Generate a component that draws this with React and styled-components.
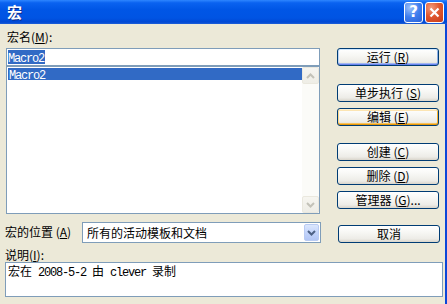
import React from "react";
import styled, { createGlobalStyle, css } from "styled-components";

const GlobalStyle = createGlobalStyle`
  html, body { margin: 0; padding: 0; background: #ECE9D8; }
  body { font-family: "Noto Sans CJK SC", "Noto Sans", sans-serif; font-size: 12px; color: #000; }
  * { box-sizing: border-box; }
`;

const Window = styled.div`
  width: 447px;
  height: 304px;
  display: flex;
  flex-direction: column;
  overflow: hidden;
  background: #ECE9D8;
`;

const TitleBar = styled.div`
  height: 24px;
  flex: none;
  display: flex;
  align-items: center;
  padding: 0 3px 0 7px;
  background: linear-gradient(
    to bottom,
    #2E86FF 0%,
    #0A62F0 12%,
    #0056E6 40%,
    #0054E3 75%,
    #0048D4 92%,
    #1D5FD8 100%
  );
`;

const TitleText = styled.div`
  flex: 1;
  color: #fff;
  font-weight: bold;
  font-size: 15px;
  line-height: 18px;
  text-shadow: 1px 1px 0 #0A2A8A;
`;

const TitleButtons = styled.div`
  display: flex;
  gap: 2px;
`;

const CaptionButton = styled.div`
  width: 19px;
  height: 21px;
  border: 1px solid #fff;
  border-radius: 3px;
  display: flex;
  align-items: center;
  justify-content: center;
  color: #fff;
  font-family: "DejaVu Sans", sans-serif;
  font-weight: bold;
  font-size: 15px;
  ${(p) =>
    p.$kind === "close"
      ? css`
          background: radial-gradient(circle at 30% 25%, #F29A7C 0%, #E0582F 45%, #C83B1A 100%);
        `
      : css`
          background: radial-gradient(circle at 30% 25%, #9CC1FA 0%, #3F7EEE 50%, #2A62D8 100%);
        `}
`;

const Body = styled.div`
  flex: 1;
  display: flex;
  flex-direction: column;
  padding: 5px 0 0 6px;
  border-right: 2px solid #0B46D8;
`;

const TopSection = styled.div`
  display: flex;
  gap: 17px;
`;

const LeftCol = styled.div`
  width: 314px;
  display: flex;
  flex-direction: column;
`;

const RightCol = styled.div`
  width: 102px;
  display: flex;
  flex-direction: column;
  padding-top: 19px;
`;

const Label = styled.div`
  height: 16px;
  line-height: 16px;
  margin-left: ${(p) => p.$ml || 0}px;
  white-space: nowrap;
`;

const Mono = styled.span`
  font-family: "Liberation Mono", "DejaVu Sans Mono", monospace;
  font-size: 12px;
  letter-spacing: -1.2px;
  white-space: pre;
`;

const TextInput = styled.div`
  margin-top: 3px;
  height: 18px;
  border: 1px solid #7F9DB9;
  background: #fff;
  padding: 0 1px;
  display: flex;
  align-items: center;
`;

const Selected = styled.span`
  background: #316AC5;
  color: #fff;
  height: 14px;
  line-height: 14px;
  display: inline-block;
  padding-right: 1px;
`;

const ListBox = styled.div`
  height: 148px;
  border: 1px solid #7F9DB9;
  background: #fff;
  display: flex;
`;

const Items = styled.div`
  flex: 1;
  padding: 1px 0 0 1px;
`;

const Item = styled.div`
  height: 12px;
  line-height: 12px;
  padding-left: 1px;
  ${(p) =>
    p.$selected &&
    css`
      background: #316AC5;
      color: #fff;
    `}
`;

const ScrollBar = styled.div`
  width: 17px;
  display: flex;
  flex-direction: column;
  background: #FBFBF8;
`;

const ScrollArrow = styled.div`
  height: 17px;
  border: 1px solid #EAE8DE;
  border-radius: 2px;
  background: linear-gradient(to bottom, #F6F5F0, #EEEDE6);
  display: flex;
  align-items: center;
  justify-content: center;
`;

const ScrollTrack = styled.div`
  flex: 1;
`;

const ButtonBase = styled.div`
  width: 102px;
  height: 18px;
  border: 1px solid #003C74;
  border-radius: 3px;
  display: flex;
  align-items: center;
  justify-content: center;
  white-space: nowrap;
  line-height: 16px;
  margin-top: ${(p) => p.$mt || 0}px;
  background: linear-gradient(to bottom, #FFFFFF 0%, #F7F7F4 40%, #EDECE7 80%, #D9D5CB 100%);
  ${(p) =>
    p.$state === "default" &&
    css`
      box-shadow: inset 0 1px 0 #CEE7FF, inset 0 -1px 0 #6982EE, inset 1px 0 0 #BCD4F6,
        inset -1px 0 0 #89ADE4, inset 0 -2px 0 #A0B6F0;
    `}
  ${(p) =>
    p.$state === "hot" &&
    css`
      box-shadow: inset 0 1px 0 #FFF0CF, inset 0 -1px 0 #E5970A, inset 1px 0 0 #FBD88C,
        inset -1px 0 0 #F8B330, inset 0 -2px 0 #F9C25A, inset 0 2px 0 #FCE5B3;
    `}
`;

const LocationRow = styled.div`
  margin-top: 8px;
  display: flex;
  align-items: flex-start;
`;

const LocationLabel = styled(Label)`
  width: 77px;
  margin-left: -1px;
  margin-top: 2px;
`;

const Combo = styled.div`
  width: 239px;
  height: 21px;
  border: 1px solid #7F9DB9;
  background: #fff;
  display: flex;
  align-items: center;
  padding-left: 4px;
`;

const ComboText = styled.div`
  flex: 1;
`;

const ComboArrow = styled.div`
  width: 15px;
  height: 17px;
  margin-right: 1px;
  border: 1px solid #B9CBF3;
  border-radius: 2px;
  background: linear-gradient(to bottom, #DCE7FD 0%, #C3D4FB 50%, #B2C6F5 100%);
  display: flex;
  align-items: center;
  justify-content: center;
`;

const CancelWrap = styled.div`
  margin-left: 17px;
  margin-top: 3px;
`;

const DescLabel = styled(Label)`
  margin-top: 4px;
  margin-left: -1px;
  height: 15px;
  line-height: 15px;
`;

const TextArea = styled.div`
  margin-left: -1px;
  width: 438px;
  height: 35px;
  border: 1px solid #7F9DB9;
  background: #fff;
  padding: 1px 2px;
  line-height: 14px;
`;

const Chevron = ({ dir = "down", color = "#C3C2B8", w = 7 }) => (
  <svg width={w + 2} height="6" viewBox="0 0 9 6">
    <path
      d={dir === "down" ? "M1 1 L4.5 4.5 L8 1" : "M1 5 L4.5 1.5 L8 5"}
      fill="none"
      stroke={color}
      strokeWidth="2"
    />
  </svg>
);

const Acc = ({ children }) => (
  <>
    (<u>{children}</u>)
  </>
);

export default function App() {
  return (
    <>
      <GlobalStyle />
      <Window>
        <TitleBar>
          <TitleText>宏</TitleText>
          <TitleButtons>
            <CaptionButton $kind="help">?</CaptionButton>
            <CaptionButton $kind="close">
              <svg width="11" height="11" viewBox="0 0 11 11">
                <path d="M1.5 1.5 L9.5 9.5 M9.5 1.5 L1.5 9.5" stroke="#fff" strokeWidth="2.2" />
              </svg>
            </CaptionButton>
          </TitleButtons>
        </TitleBar>
        <Body>
          <TopSection>
            <LeftCol>
              <Label $ml={1}>
                宏名<Acc>M</Acc>:
              </Label>
              <TextInput>
                <Selected>
                  <Mono>Macro2</Mono>
                </Selected>
              </TextInput>
              <ListBox>
                <Items>
                  <Item $selected>
                    <Mono>Macro2</Mono>
                  </Item>
                </Items>
                <ScrollBar>
                  <ScrollArrow>
                    <Chevron dir="up" />
                  </ScrollArrow>
                  <ScrollTrack />
                  <ScrollArrow>
                    <Chevron dir="down" />
                  </ScrollArrow>
                </ScrollBar>
              </ListBox>
            </LeftCol>
            <RightCol>
              <ButtonBase $state="default">
                运行 <Acc>R</Acc>
              </ButtonBase>
              <ButtonBase $mt={18}>
                单步执行 <Acc>S</Acc>
              </ButtonBase>
              <ButtonBase $mt={6} $state="hot">
                编辑 <Acc>E</Acc>
              </ButtonBase>
              <ButtonBase $mt={17}>
                创建 <Acc>C</Acc>
              </ButtonBase>
              <ButtonBase $mt={6}>
                删除 <Acc>D</Acc>
              </ButtonBase>
              <ButtonBase $mt={6}>
                管理器 <Acc>G</Acc>...
              </ButtonBase>
            </RightCol>
          </TopSection>
          <LocationRow>
            <LocationLabel>
              宏的位置 <Acc>A</Acc>
            </LocationLabel>
            <Combo>
              <ComboText>所有的活动模板和文档</ComboText>
              <ComboArrow>
                <Chevron dir="down" color="#4D6185" />
              </ComboArrow>
            </Combo>
            <CancelWrap>
              <ButtonBase>取消</ButtonBase>
            </CancelWrap>
          </LocationRow>
          <DescLabel>
            说明<Acc>I</Acc>:
          </DescLabel>
          <TextArea>
            宏在<Mono> 2008-5-2 </Mono>由<Mono> clever </Mono>录制
          </TextArea>
        </Body>
      </Window>
    </>
  );
}
